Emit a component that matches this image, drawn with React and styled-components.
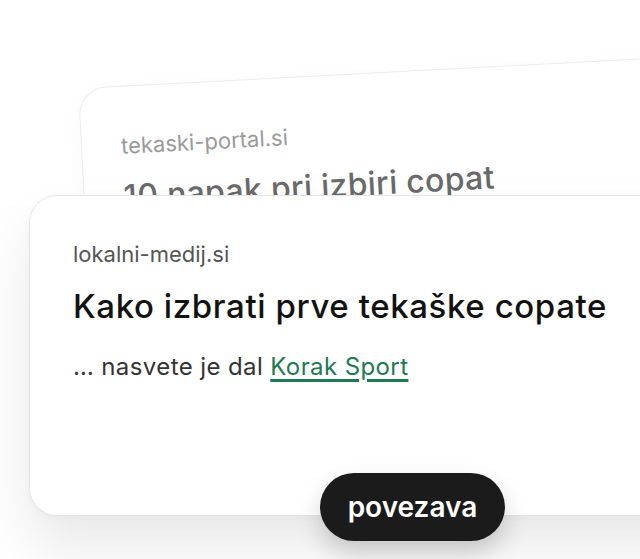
import React from 'react';
import styled, { createGlobalStyle } from 'styled-components';

const GlobalStyle = createGlobalStyle`
  html, body {
    margin: 0;
    padding: 0;
    background: #ffffff;
    overflow: hidden;
  }
  body {
    font-family: Inter, "Liberation Sans", Arial, sans-serif;
    -webkit-font-smoothing: antialiased;
  }
`;

const Stage = styled.div`
  position: relative;
  width: 640px;
  height: 559px;
  overflow: hidden;
  padding: 195px 0 0 29px;
  box-sizing: border-box;
`;

// the card lying behind, tilted a little
const BackCard = styled.div`
  position: absolute;
  left: 78px;
  top: 88px;
  width: 700px;
  height: 300px;
  box-sizing: border-box;
  padding: 46px 0 0 39px;
  background: #ffffff;
  border: 1px solid #ececec;
  border-radius: 28px;
  transform: rotate(-3deg);
  transform-origin: top left;
  box-shadow: 0 4px 18px rgba(0, 0, 0, 0.03);
`;

const FrontCard = styled.div`
  position: relative;
  z-index: 1;
  width: 700px;
  height: 321px;
  box-sizing: border-box;
  padding: 45px 0 0 43px;
  background: #ffffff;
  border: 1px solid #e6e6e6;
  border-radius: 28px;
  box-shadow: 0 32px 56px rgba(0, 0, 0, 0.09), 0 2px 6px rgba(0, 0, 0, 0.03);
`;

const Source = styled.div`
  font-size: 22px;
  line-height: 1.2;
  color: ${(p) => (p.$muted ? '#9a9a9a' : '#555555')};
`;

const Title = styled.h2`
  margin: ${(p) => (p.$muted ? '19px' : '20px')} 0 0;
  font-size: ${(p) => (p.$muted ? '32px' : '33px')};
  font-weight: 480;
  line-height: 1.2;
  letter-spacing: ${(p) => (p.$muted ? '0.3px' : '0.6px')};
  color: ${(p) => (p.$muted ? '#6a6a6a' : '#121212')};
`;

const Lead = styled.p`
  margin: 26px 0 0;
  font-size: 24px;
  line-height: 1.2;
  letter-spacing: 0.4px;
  color: #333333;
`;

const SourceLink = styled.a`
  color: #1e7a52;
  text-decoration: underline;
  text-decoration-thickness: 3px;
  text-underline-offset: 4px;
  text-decoration-skip-ink: auto;
`;

const LinkPill = styled.button`
  position: absolute;
  left: 290px;
  bottom: -26px;
  width: 185px;
  height: 68px;
  border: none;
  border-radius: 34px;
  background: #1b1b1b;
  color: #ffffff;
  font-family: Inter, "Liberation Sans", Arial, sans-serif;
  font-size: 28px;
  font-weight: 560;
  box-shadow: 0 12px 24px rgba(0, 0, 0, 0.18);
  cursor: pointer;
`;

export default function App() {
  return (
    <>
      <GlobalStyle />
      <Stage>
        <BackCard>
          <Source $muted>tekaski-portal.si</Source>
          <Title $muted>10 napak pri izbiri copat</Title>
        </BackCard>
        <FrontCard>
          <Source>lokalni-medij.si</Source>
          <Title>Kako izbrati prve tekaške copate</Title>
          <Lead>
            … nasvete je dal <SourceLink href="#">Korak Sport</SourceLink>
          </Lead>
          <LinkPill>povezava</LinkPill>
        </FrontCard>
      </Stage>
    </>
  );
}
